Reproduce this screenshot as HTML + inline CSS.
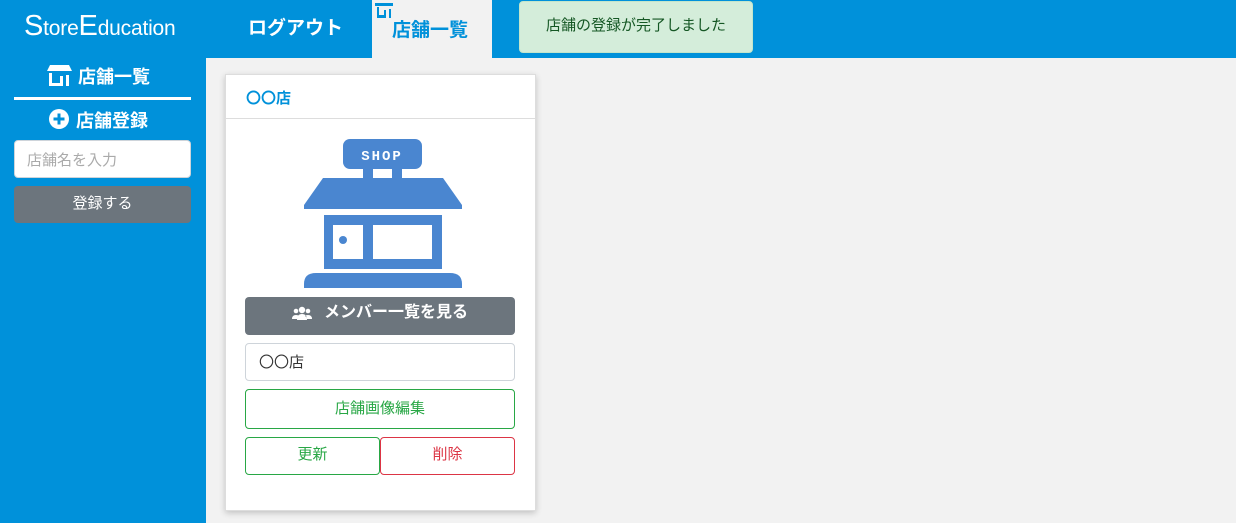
<!DOCTYPE html>
<html><head><meta charset="utf-8"><style>
*{box-sizing:border-box;margin:0;padding:0}
body{width:1236px;height:523px;overflow:hidden;background:#f2f2f2;font-family:"Liberation Sans","Noto Sans CJK JP",sans-serif;position:relative}
.hdr{position:absolute;left:0;top:0;width:1236px;height:58px;background:#0091da}
.abs{position:absolute}
.side{position:absolute;left:0;top:58px;width:206px;height:465px;background:#0091da}
.btn{position:absolute;border-radius:4px;text-align:center;font-size:15px}
</style></head><body>
<div class="hdr">
 <div class="abs" style="left:24px;top:10px;color:#fff;font-size:21px;letter-spacing:-0.2px"><span style="font-size:29px">S</span>tore<span style="font-size:29px">E</span>ducation</div>
 <div class="abs" style="left:248px;top:13px;color:#fff;font-size:19px;font-weight:bold">ログアウト</div>
 <div class="abs" style="left:372px;top:0;width:120px;height:58px;background:#f2f2f2">
  <svg class="abs" style="left:1px;top:0" width="22" height="18" viewBox="0 0 22 18"><path d="M2 3h18v3H2z M4 7h2v8h5v-5h2v8H4z M16 9h2v9h-2z" fill="#0091da"/></svg>
  <div class="abs" style="left:20px;top:15px;color:#0091da;font-size:19px;font-weight:bold">店舗一覧</div>
 </div>
 <div class="abs" style="left:519px;top:1px;width:234px;height:52px;background:#d4edda;border:1px solid #c3e6cb;border-radius:4px;color:#155724;font-size:15px;line-height:48px;text-align:center">店舗の登録が完了しました</div>
</div>
<div class="side">
 <svg class="abs" style="left:47px;top:7px" width="25" height="22" viewBox="0 0 25 22"><path d="M3 0h19l3 6H0z M2 8h3v10h8v-7h3v10H2z M19 10h3v11h-3z" fill="#fff"/></svg>
 <div class="abs" style="left:78px;top:5px;color:#fff;font-size:18px;font-weight:bold">店舗一覧</div>
 <div class="abs" style="left:14px;top:39px;width:177px;height:3px;background:#fff"></div>
 <svg class="abs" style="left:49px;top:51px" width="20" height="20" viewBox="0 0 20 20"><circle cx="10" cy="10" r="10" fill="#fff"/><path d="M8.5 4.5h3v4h4v3h-4v4h-3v-4h-4v-3h4z" fill="#0091da"/></svg>
 <div class="abs" style="left:76px;top:49px;color:#fff;font-size:18px;font-weight:bold">店舗登録</div>
 <div class="abs" style="left:14px;top:82px;width:177px;height:38px;background:#fff;border:1px solid #ced4da;border-radius:4px;color:#aaa;font-size:15px;padding:8px 12px">店舗名を入力</div>
 <div class="btn" style="left:14px;top:128px;width:177px;height:37px;background:#6c757d;color:#fff;line-height:36px">登録する</div>
</div>
<div class="abs" style="left:225px;top:74px;width:311px;height:437px;background:#fff;border:1px solid #ddd;box-shadow:0 2px 6px rgba(0,0,0,.2)">
 <div style="height:44px;border-bottom:1px solid #ddd;color:#0091da;font-weight:bold;font-size:15px;padding:12px 20px">〇〇店</div>
 <svg class="abs" style="left:-226px;top:-75px" width="1236" height="523" viewBox="0 0 1236 523">
  <g fill="#4a86d0">
   <rect x="343" y="139" width="79" height="30" rx="7"/>
   <rect x="363" y="168" width="10" height="11"/><rect x="392" y="168" width="10" height="11"/>
   <path d="M323 178h120l19 27v4H304v-4z"/>
   <path d="M324 215h118v54H324z M333 225v34h30v-34z M373 225v34h59v-34z" fill-rule="evenodd"/>
   <circle cx="343" cy="240" r="4"/>
   <path d="M304 288v-4q0-11 12-11h134q12 0 12 11v4z"/>
  </g>
  <text x="382" y="160" fill="#fff" font-size="14" font-weight="bold" text-anchor="middle" letter-spacing="2" font-family="Liberation Mono, monospace">SHOP</text>
 </svg>
 <div class="btn" style="left:19px;top:222px;width:270px;height:38px;background:#6c757d;color:#fff;font-weight:bold;font-size:16px;line-height:32px">
  <svg style="vertical-align:middle;margin-right:12px" width="20" height="14" viewBox="0 0 20 14"><circle cx="10" cy="4" r="3.2" fill="#fff"/><circle cx="4" cy="5" r="2.3" fill="#fff"/><circle cx="16" cy="5" r="2.3" fill="#fff"/><path d="M5 14q0-6 5-6t5 6z M0 13q0-4 4-4 2 0 3 1-2 1-2 3z M20 13q0-4-4-4-2 0-3 1 2 1 2 3z" fill="#fff"/></svg>メンバー一覧を見る</div>
 <div class="abs" style="left:19px;top:268px;width:270px;height:38px;border:1px solid #ced4da;border-radius:4px;font-size:15px;color:#333;padding:7px 13px">〇〇店</div>
 <div class="btn" style="left:19px;top:314px;width:270px;height:40px;border:1px solid #28a745;color:#28a745;line-height:37px">店舗画像編集</div>
 <div class="btn" style="left:19px;top:362px;width:135px;height:38px;border:1px solid #28a745;color:#28a745;line-height:34px">更新</div>
 <div class="btn" style="left:154px;top:362px;width:135px;height:38px;border:1px solid #dc3545;color:#dc3545;line-height:34px">削除</div>
</div>
</body></html>
